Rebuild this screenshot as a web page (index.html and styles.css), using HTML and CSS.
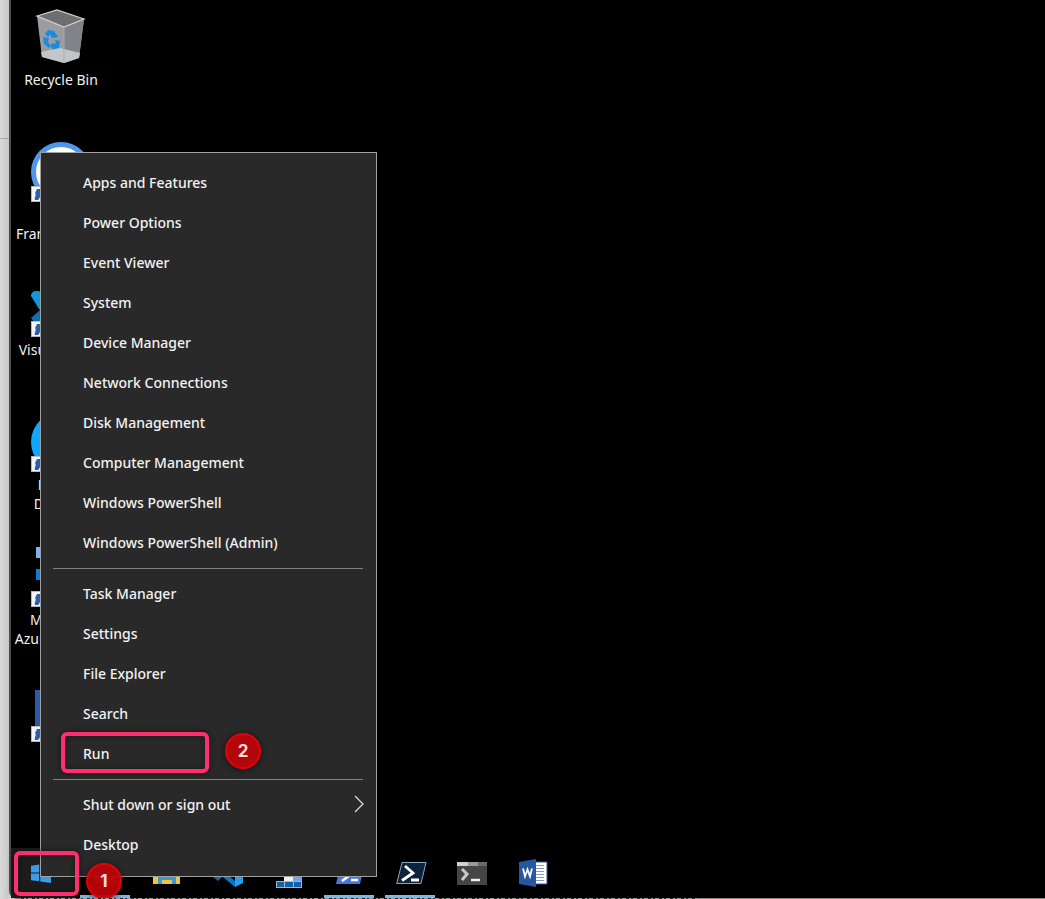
FILE: index.html
```html
<!DOCTYPE html>
<html lang="en">
<head>
<meta charset="utf-8">
<title>Desktop</title>
<link rel="stylesheet" href="styles.css">
</head>
<body>
<svg class="defs" aria-hidden="true">
  <symbol id="shortcut" viewBox="0 0 16 16">
    <rect x=".5" y=".5" width="15" height="15" fill="#f4f4f6" stroke="#b9b9bd"/>
    <path d="M4 14C3 11 6 9 4 7l2-4h7v8l-3-1c-2 1-1 3-3 4z" fill="#2b5fa8"/>
  </symbol>
</svg>
<div class="page">
  <div class="edge"></div>
  <main class="screen">
    <section class="icons" aria-label="Desktop icons">
      <div class="icon">
        <svg class="art" viewBox="0 0 60 60">
          <path d="M6 9 26 3 53 12 48 51 33 56 11 50z" fill="#9a9ca1"/>
          <path d="M33 20 53 12 48 51 33 56z" fill="#818388"/>
          <path d="M6 9 26 3 53 12 33 20z" fill="#6e6e6e"/>
          <path d="M10 45 29 41 49 46 48 51 33 56 11 50z" fill="#c2c6ca"/>
          <path d="M6 9 26 3 53 12 33 20z" fill="none" stroke="#d0d0d0" stroke-width="1.2"/>
          <path d="M33 20v36" stroke="#a9abb0"/>
          <g fill="#178be0"><path d="m14 27 3-4 6 1 4 6-6 1-2-4-2 3z"/><path d="m12 30 6 1-1 4 3 4-2 2-5-4z"/><path d="m20 37 5-1-1-3 5 1-1 7-5 1v1l-3-3z"/></g>
        </svg>
        <span class="name">Recycle Bin</span>
      </div>
      <div class="icon">
        <svg class="art" viewBox="0 0 60 60">
          <circle cx="30" cy="30" r="27.5" fill="#fff" stroke="#4f97ee" stroke-width="5"/>
          <use href="#shortcut" x="0" y="44" width="16" height="16"/>
        </svg>
        <span class="name name-cut"><br>Fran</span>
      </div>
      <div class="icon">
        <svg class="art" viewBox="0 0 60 60">
          <path d="M0 41 46 0l14 6v48l-14 6V17L8 45H3z" fill="#0a6fb5"/>
          <path d="M0 19q0-4 4-5h4L46 46v14L30 52 8 32z" fill="#1196dc"/>
          <use href="#shortcut" x="0" y="44" width="16" height="16"/>
        </svg>
        <span class="name">Visual Studio<br>Code</span>
      </div>
      <div class="icon">
        <svg class="art" viewBox="0 0 60 60">
          <circle cx="30" cy="30" r="30" fill="#0da9ff"/>
          <use href="#shortcut" x="0" y="44" width="16" height="16"/>
        </svg>
        <span class="name">Docker<br>Desktop</span>
      </div>
      <div class="icon">
        <svg class="art" viewBox="0 0 60 60">
          <path d="M5 0h50v11H5z" fill="#7ab4f5"/><path d="M5 22h50v11H5z" fill="#0f7bd4"/>
          <use href="#shortcut" x="0" y="44" width="16" height="16"/>
        </svg>
        <span class="name">Microsoft<br>Azure Storage</span>
      </div>
      <div class="icon">
        <svg class="art" viewBox="0 0 60 60">
          <path d="M4 8h48v44H4z" fill="#2c5aa8"/>
          <use href="#shortcut" x="0" y="44" width="16" height="16"/>
        </svg>
      </div>
    </section>

    <nav class="taskbar" aria-label="Taskbar">
      <button class="start" aria-label="Start">
        <svg viewBox="0 0 20 20"><path d="M0 2.800 8.200 1.600v7.800H0zM9.300 1.400 20 0v9.400H9.300zM0 10.500h8.200v7.800L0 17.200zM9.300 10.500H20V20L9.300 18.500z" fill="#3f9be8"/></svg>
      </button>
      <button class="task open" aria-label="Browser">
        <svg viewBox="0 0 32 32"><circle cx="16" cy="16" r="13" fill="#a02a30"/><path d="M6 20q10 8 20 0" stroke="#d04048" stroke-width="3" fill="none"/></svg>
      </button>
      <button class="task" aria-label="File Explorer">
        <svg viewBox="0 0 32 32"><path d="M2 6h10l3 3h14v18H2z" fill="#f6c338"/><path d="M7 17h18v10H7z" fill="#3c96dc"/><path d="M11 23h10v4H11z" fill="#f6c338"/></svg>
      </button>
      <button class="task" aria-label="Visual Studio Code">
        <svg viewBox="0 0 32 32"><path d="M1 20 20 2l3 6L6 24z" fill="#0a68ad"/><path d="m1 12 4-3 18 15v6z" fill="#0877c4"/><path d="m23 1 8 4v21l-8 4z" fill="#22a0f4"/></svg>
      </button>
      <button class="task" aria-label="Server Manager">
        <svg viewBox="0 0 32 32"><path d="M11 6h18v19H11z" fill="#6aa7f2"/><path d="M11 14h9v11h-9z" fill="#f2f2f2"/><path d="M3 24h26v7H3z" fill="#a9b3bd"/><path d="M4 25h7v5H4zM12 25h8v5h-8zM21 25h7v5h-7z" fill="#0d62a8"/></svg>
      </button>
      <button class="task open" aria-label="Windows PowerShell ISE">
        <svg viewBox="0 0 32 32"><path d="M7 5h24l-5 22H2z" fill="#4479dc"/><path d="m11 9 8 7L8 24M17 23h7" fill="none" stroke="#fff" stroke-width="2.500"/></svg>
      </button>
      <button class="task open" aria-label="Windows PowerShell">
        <svg viewBox="0 0 32 32"><path d="M7 5.500h24L26 26.500H1.700z" fill="#10233c" stroke="#8aa6c6"/><path d="m10 9 8 7L7 23.500M16 23h8" fill="none" stroke="#fff" stroke-width="2.800"/></svg>
      </button>
      <button class="task" aria-label="Terminal">
        <svg viewBox="0 0 32 32"><path d="M1 5h30v23H1z" fill="#454545"/><path d="M1 5h11v4H1z" fill="#d0d0d0"/><path d="M12 5h10v4H12z" fill="#999"/><path d="M22 5h9v4h-9z" fill="#6a6a6a"/><path d="m6 12 5 5-5 6" fill="none" stroke="#c8c8c8" stroke-width="3"/><path d="M15 23h9" stroke="#f2f2f2" stroke-width="2.400"/></svg>
      </button>
      <button class="task" aria-label="Word">
        <svg viewBox="0 0 32 32"><path d="M17 5h13v22H17z" fill="#fff" stroke="#2b579a"/><path d="M18 8.500h9M18 11.500h9M18 14.500h9M18 17.500h9M18 20.500h9M18 23.500h9" stroke="#7d9ac8" stroke-width="1.200"/><path d="M2 5 19 2v28L2 27z" fill="#2856a0"/><path d="m6 11.500 2 8 2.500-7 2.500 7 2-8" fill="none" stroke="#fff" stroke-width="1.800"/></svg>
      </button>
    </nav>

    <div class="menu" role="menu">
      <button role="menuitem">Apps and Features</button>
      <button role="menuitem">Power Options</button>
      <button role="menuitem">Event Viewer</button>
      <button role="menuitem">System</button>
      <button role="menuitem">Device Manager</button>
      <button role="menuitem">Network Connections</button>
      <button role="menuitem">Disk Management</button>
      <button role="menuitem">Computer Management</button>
      <button role="menuitem">Windows PowerShell</button>
      <button role="menuitem">Windows PowerShell (Admin)</button>
      <hr>
      <button role="menuitem">Task Manager</button>
      <button role="menuitem">Settings</button>
      <button role="menuitem">File Explorer</button>
      <button role="menuitem">Search</button>
      <div class="marked">
        <button role="menuitem">Run</button>
        <span class="frame frame-run"></span>
        <span class="badge badge-run">2</span>
      </div>
      <hr>
      <button role="menuitem" class="sub">Shut down or sign out
        <svg viewBox="0 0 10 18"><path d="m1 1 8 8-8 8" fill="none" stroke="#d8d8d8" stroke-width="1.300"/></svg>
      </button>
      <button role="menuitem">Desktop</button>
    </div>
    <span class="frame frame-start"></span>
    <span class="badge badge-start">1</span>
  </main>
</div>
</body>
</html>
```
FILE: styles.css
```css
* { box-sizing: border-box; }

body {
  margin: 0;
  background: #d4d4d4;
  font-family: "Noto Sans", "Open Sans", sans-serif;
  font-size: 14px;
  color: #f2f2f2;
}

button {
  border: 0;
  padding: 0;
  background: none;
  color: inherit;
  font: inherit;
}

.defs { position: absolute; width: 0; height: 0; }

.page {
  position: relative;
  display: flex;
  height: 100vh;
  overflow: hidden;
}

.edge {
  width: 9px;
  flex: none;
  background: linear-gradient(#aaa, #aaa) 0 138px / 100% 1px no-repeat,
    linear-gradient(90deg, #dadada, #c8c8c8);
}

.screen {
  position: relative;
  flex: 1;
  display: flex;
  flex-direction: column;
  justify-content: space-between;
  background: #000;
  border-left: 2px solid #4c4c4c;
  border-bottom: 1px solid #8c8888;
  border-bottom-left-radius: 8px;
}

.icons {
  display: flex;
  flex-direction: column;
  width: 100px;
}

.icon {
  display: flex;
  flex-direction: column;
  align-items: center;
  gap: 3px;
  height: 135px;
  padding-top: 7px;
}

.art { width: 60px; height: 60px; flex: none; }

.name {
  line-height: 19px;
  text-align: center;
  white-space: nowrap;
}

.name-cut { width: 90px; text-align: left; }

.taskbar { display: flex; height: 50px; }

.start {
  width: 64px;
  display: flex;
  align-items: center;
  padding-left: 20px;
  background: #1c1c1c;
}

.start svg { width: 20px; height: 20px; }

.task {
  width: 61px;
  display: grid;
  place-items: center;
  background: linear-gradient(#76b9ed, #76b9ed) 5px 100% / 0 3px no-repeat;
}

.task.open { background-size: 50px 3px; }
.task svg { width: 32px; height: 32px; }

.menu {
  position: absolute;
  left: 29px;
  bottom: 21px;
  width: 337px;
  padding: 10px 0 11px;
  display: flex;
  flex-direction: column;
  background: #292929;
  border: 1px solid #a0a0a0;
  font-weight: 500;
}

.menu button {
  width: 100%;
  height: 40px;
  padding: 0 12px 2px 42px;
  text-align: left;
}

.menu .sub {
  display: flex;
  align-items: center;
  justify-content: space-between;
}

.sub svg { width: 10px; height: 18px; }

.menu hr {
  width: 310px;
  height: 1px;
  margin: 5px 12px;
  border: 0;
  background: #808080;
}

.marked { position: relative; height: 40px; }

.frame {
  position: absolute;
  border: 4px solid #ff2e6c;
  border-radius: 6px;
  box-shadow: 0 0 6px #0008, inset 0 0 6px #0006;
}

.frame-run { left: 20px; top: -2px; width: 148px; height: 41px; }
.frame-start { left: 3px; bottom: 2px; width: 65px; height: 45px; }

.badge {
  position: absolute;
  width: 36px;
  height: 36px;
  border: 2px solid #e30008;
  border-radius: 50%;
  background: #b80408f2;
  box-shadow: 0 1px 6px #0009;
  color: #fadcdc;
  font: bold 17px/32px Inter, sans-serif;
  text-align: center;
}

.badge-run { left: 184px; top: -1px; }
.badge-start { left: 75px; bottom: -1px; }

/* Tops of the letters of the document below the desktop */
.screen::after {
  content: "";
  position: absolute;
  left: 10px;
  bottom: -1px;
  width: 676px;
  height: 1px;
  background: repeating-linear-gradient(90deg, #222 0 3px, #999 3px 5px, #333 5px 7px, #999 7px 11px);
}
```
